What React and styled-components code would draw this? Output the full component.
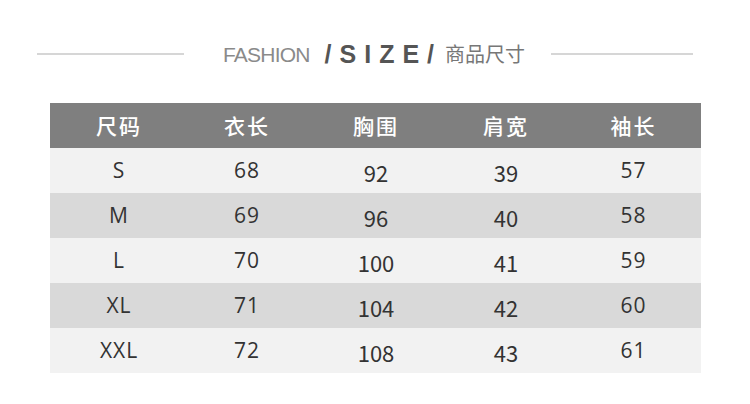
import styled, { createGlobalStyle } from 'styled-components';

const GlobalStyle = createGlobalStyle`
  html, body {
    margin: 0;
    padding: 0;
    background: #ffffff;
  }
`;

const headers = ['尺码', '衣长', '胸围', '肩宽', '袖长'];

const rows = [
  ['S', '68', '92', '39', '57'],
  ['M', '69', '96', '40', '58'],
  ['L', '70', '100', '41', '59'],
  ['XL', '71', '104', '42', '60'],
  ['XXL', '72', '108', '43', '61'],
];

// columns 3 and 4 use a narrower face and sit a little lower
const narrowCols = [2, 3];

const App = () => {
  return (
    <Page>
      <GlobalStyle />
      <TitleRow>
        <Rule $width={147} $gap={39} />
        <Fashion>FASHION</Fashion>
        <Size>/SIZE/</Size>
        <Caption>商品尺寸</Caption>
        <Rule $width={142} $gap={0} $left={26} />
      </TitleRow>

      <Table>
        <HeadRow>
          {headers.map((h) => (
            <HeadCell key={h}>{h}</HeadCell>
          ))}
        </HeadRow>
        {rows.map((row, i) => (
          <Row key={row[0]} $dark={i % 2 === 1}>
            {row.map((v, j) => (
              <Cell key={j} $narrow={narrowCols.includes(j)}>
                {v}
              </Cell>
            ))}
          </Row>
        ))}
      </Table>
    </Page>
  );
};

export default App; /*


*/ // Styling

const Page = styled.div`
  width: 750px;
  height: 404px;
  background: #fff;
  overflow: hidden;
`;

const TitleRow = styled.div`
  display: flex;
  align-items: center;
  height: 40px;
  margin-top: 34px;
  padding-left: 37px;
`;

const Rule = styled.div`
  width: ${({ $width }) => $width}px;
  height: 2px;
  background: #d6d6d6;
  margin-right: ${({ $gap }) => $gap}px;
  margin-left: ${({ $left }) => $left || 0}px;
`;

const Fashion = styled.span`
  font-family: 'Liberation Sans', Arial, sans-serif;
  font-size: 21px;
  color: #8a8a8a;
  letter-spacing: -0.8px;
  margin-right: 15px;
  line-height: 1;
`;

const Size = styled.span`
  font-family: 'Liberation Sans', Arial, sans-serif;
  font-weight: 700;
  font-size: 25px;
  letter-spacing: 8px;
  color: #555555;
  margin-right: 3px;
  line-height: 1;
`;

const Caption = styled.span`
  font-family: 'Noto Sans CJK SC', sans-serif;
  font-size: 20px;
  color: #777777;
  line-height: 1;
`;

const Table = styled.div`
  margin-top: 29px;
  margin-left: 50px;
  width: 651px;
`;

const grid = `
  display: grid;
  grid-template-columns: 138px 118px 140px 120px 135px;
  align-items: center;
`;

const HeadRow = styled.div`
  ${grid};
  height: 45px;
  background: #7f7f7f;
`;

const HeadCell = styled.div`
  text-align: center;
  font-family: 'Noto Sans CJK SC', sans-serif;
  font-size: 21px;
  font-weight: 500;
  color: #ffffff;
  letter-spacing: 2px;
  line-height: 1;
`;

const Row = styled.div`
  ${grid};
  height: 45px;
  background: ${({ $dark }) => ($dark ? '#d9d9d9' : '#f2f2f2')};
`;

const Cell = styled.div`
  text-align: center;
  font-family: ${({ $narrow }) =>
    $narrow ? "'Noto Sans CJK SC', sans-serif" : "'Open Sans', sans-serif"};
  font-size: ${({ $narrow }) => ($narrow ? '22px' : '21px')};
  color: #333333;
  letter-spacing: ${({ $narrow }) => ($narrow ? '0' : '1px')};
  line-height: 1;
  padding-top: ${({ $narrow }) => ($narrow ? '3px' : '0')};
`;
